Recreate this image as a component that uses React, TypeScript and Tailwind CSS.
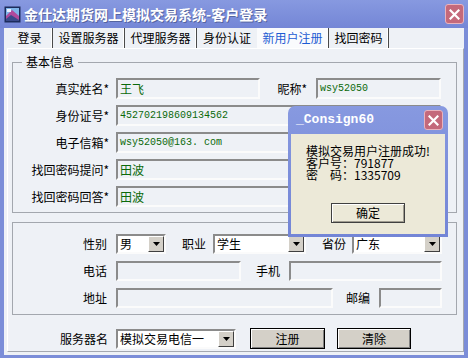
import React from 'react';

const cjk = "font-['Noto_Sans_CJK_SC',sans-serif]";

type FieldProps = { className: string; value?: string; mono?: boolean };

const Field = ({ className, value, mono }: FieldProps) => (
  <div
    className={`${className} flex items-center pl-[2px] border-2 border-t-[#8b8b8b] border-l-[#8b8b8b] border-r-[#fbfbfb] border-b-[#fbfbfb] bg-[#eef1f6] text-[#0b6a0b] whitespace-nowrap ${
      mono ? "font-['Liberation_Mono',monospace] text-[10px]" : 'text-[12px]'
    }`}
  >
    {value}
  </div>
);

const Select = ({ className, value }: { className: string; value: string }) => (
  <div
    className={`${className} h-[20px] flex items-center border-2 border-t-[#8b8b8b] border-l-[#8b8b8b] border-r-[#fbfbfb] border-b-[#fbfbfb] bg-white`}
  >
    <span className="flex-1 pl-[2px] text-[12px] leading-[14px] text-black whitespace-nowrap">{value}</span>
    <span className="w-[16px] h-[16px] flex items-center justify-center bg-[#d4d0c8] border border-t-white border-l-white border-r-[#404040] border-b-[#404040]">
      <svg width="7" height="4" viewBox="0 0 7 4">
        <path d="M0 0h7L3.5 4z" fill="#000" />
      </svg>
    </span>
  </div>
);

const Btn = ({ className, label }: { className: string; label: string }) => (
  <button
    className={`${className} h-[21px] bg-[#d4d0c8] border border-black shadow-[inset_1px_1px_0_#fff,inset_-1px_-1px_0_#808080] text-[12px] text-black leading-none`}
  >
    {label}
  </button>
);

const CloseBtn = () => (
  <div className="w-[19px] h-[20px] rounded-[3px] bg-[#c4697b] border border-[#e9b3bd] flex items-center justify-center">
    <svg width="11" height="11" viewBox="0 0 11 11">
      <path d="M1.5 1.5l8 8M9.5 1.5l-8 8" stroke="#fff" strokeWidth="2.2" strokeLinecap="square" />
    </svg>
  </div>
);

const tabs = [
  { label: '登录', w: 'w-[46px]', sep: true },
  { label: '设置服务器', w: 'w-[72px]', sep: true },
  { label: '代理服务器', w: 'w-[72px]', sep: true },
  { label: '身份认证', w: 'w-[60px]', sep: false },
  { label: '新用户注册', w: 'w-[72px]', sep: true, active: true },
  { label: '找回密码', w: 'w-[60px]', sep: true },
];

export default function App() {
  return (
    <div
      className={`${cjk} relative w-[468px] h-[358px] overflow-hidden bg-[#7b8dd8] flex flex-col text-[12px] leading-[14px] text-black`}
    >
      {/* title bar */}
      <div className="h-[28px] shrink-0 flex items-center pl-[4px] pr-[4px] bg-gradient-to-b from-[#8799e0] to-[#7486d6]">
        <svg width="17" height="17" viewBox="0 0 17 17">
          <rect x="0.5" y="0.5" width="16" height="16" fill="#1c2c5c" />
          <rect x="2" y="2" width="13" height="13" fill="#7fb4e8" />
          <path d="M2 10L8 4l7 6v5H2z" fill="#b04a9c" />
          <path d="M2 13l5-4 8 5v1H2z" fill="#3a4a8a" />
          <rect x="3" y="3" width="4" height="3" fill="#e8f0ff" />
        </svg>
        <span className="ml-[3px] text-[14px] font-bold text-white [text-shadow:1px_1px_0_#55649f]">
          金仕达期货网上模拟交易系统-客户登录
        </span>
        <div className="ml-auto">
          <CloseBtn />
        </div>
      </div>

      {/* client area */}
      <div className="mx-[4px] h-[327px] bg-[#eef1f6] flex flex-col">
        <div className="h-[20px] flex pl-[3px]">
          {tabs.map((t) => (
            <div
              key={t.label}
              className={`${t.w} flex items-center justify-center ${
                t.sep ? 'border-r border-r-[#4a4a4a] shadow-[inset_-1px_0_0_#fff]' : ''
              } ${t.active ? 'bg-[#fafbfd] text-[#1d5cd3]' : ''}`}
            >
              {t.label}
            </div>
          ))}
        </div>

        <div className="ml-[3px] w-[457px] h-[304px] pl-[4px] border border-t-white border-l-white border-r-[#a4a8b0] border-b-[#a4a8b0]">
          {/* 基本信息 */}
          <fieldset className="mt-[6px] w-[445px] border border-[#a3a7ae] px-0 pt-[9px] pb-[5px] flex flex-col gap-[6px]">
            <legend className="ml-[9px] px-[4px] leading-[14px]">基本信息</legend>
            <div className="flex items-center h-[21px]">
              <span className="w-[96px] text-right">真实姓名*</span>
              <Field className="ml-[7px] w-[144px] h-[21px]" value="王飞" />
              <span className="w-[47px] text-right">昵称*</span>
              <Field className="ml-[9px] w-[125px] h-[21px]" value="wsy52050" mono />
            </div>
            <div className="flex items-center h-[21px]">
              <span className="w-[96px] text-right">身份证号*</span>
              <Field className="ml-[7px] w-[325px] h-[21px]" value="452702198609134562" mono />
            </div>
            <div className="flex items-center h-[21px]">
              <span className="w-[96px] text-right">电子信箱*</span>
              <Field className="ml-[7px] w-[325px] h-[21px]" value="wsy52050@163. com" mono />
            </div>
            <div className="flex items-center h-[21px]">
              <span className="w-[96px] text-right">找回密码提问*</span>
              <Field className="ml-[7px] w-[325px] h-[21px]" value="田波" />
            </div>
            <div className="flex items-center h-[21px]">
              <span className="w-[96px] text-right">找回密码回答*</span>
              <Field className="ml-[7px] w-[325px] h-[21px]" value="田波" />
            </div>
          </fieldset>

          {/* 其他信息 */}
          <div className="mt-[9px] w-[445px] border border-[#a3a7ae] pt-[11px] pb-[6px] flex flex-col gap-[7px]">
            <div className="flex items-center h-[20px]">
              <span className="w-[94px] text-right">性别</span>
              <Select className="ml-[9px] w-[50px]" value="男" />
              <span className="ml-[16px]">职业</span>
              <Select className="ml-[7px] w-[93px]" value="学生" />
              <span className="ml-[16px]">省份</span>
              <Select className="ml-[6px] w-[90px]" value="广东" />
            </div>
            <div className="flex items-center h-[20px]">
              <span className="w-[94px] text-right">电话</span>
              <Field className="ml-[9px] w-[125px] h-[20px]" />
              <span className="ml-[15px]">手机</span>
              <Field className="ml-[9px] w-[153px] h-[20px]" />
            </div>
            <div className="flex items-center h-[20px]">
              <span className="w-[94px] text-right">地址</span>
              <Field className="ml-[9px] w-[217px] h-[20px]" />
              <span className="ml-[13px]">邮编</span>
              <Field className="ml-[9px] w-[63px] h-[20px]" />
            </div>
          </div>

          <div className="mt-[13px] flex items-center h-[21px]">
            <span className="w-[96px] text-right">服务器名</span>
            <Select className="ml-[8px] w-[120px]" value="模拟交易电信一" />
            <Btn className="ml-[14px] w-[75px]" label="注册" />
            <Btn className="ml-[12px] w-[74px]" label="清除" />
          </div>
        </div>
      </div>

      {/* message box */}
      <div className="absolute left-[288px] top-[106px] w-[160px] h-[131px] rounded-t-[7px] bg-gradient-to-b from-[#8799e0] to-[#7385d6] flex flex-col">
        <div className="h-[28px] shrink-0 flex items-center pl-[8px] pr-[5px]">
          <span className="font-['Liberation_Mono',monospace] text-[13px] font-bold text-white">_Consign60</span>
          <div className="ml-auto">
            <CloseBtn />
          </div>
        </div>
        <div className="mx-[3px] mb-[3px] flex-1 bg-[#ece9d8] pt-[11px]">
          <div className="pl-[15px] text-[12px] leading-[12px] whitespace-pre flex flex-col">
            <span className="h-[12px]">模拟交易用户注册成功!</span>
            <span className="h-[12px]">客户号：791877</span>
            <span className="h-[12px]">密　码：1335709</span>
          </div>
          <div className="mt-[22px] flex justify-center">
            <button className="w-[74px] h-[20px] bg-[#ece9d8] border border-[#404040] shadow-[inset_1px_1px_0_#fff,inset_-1px_-1px_0_#a09c90] text-[12px] leading-none">
              确定
            </button>
          </div>
        </div>
      </div>
    </div>
  );
}
